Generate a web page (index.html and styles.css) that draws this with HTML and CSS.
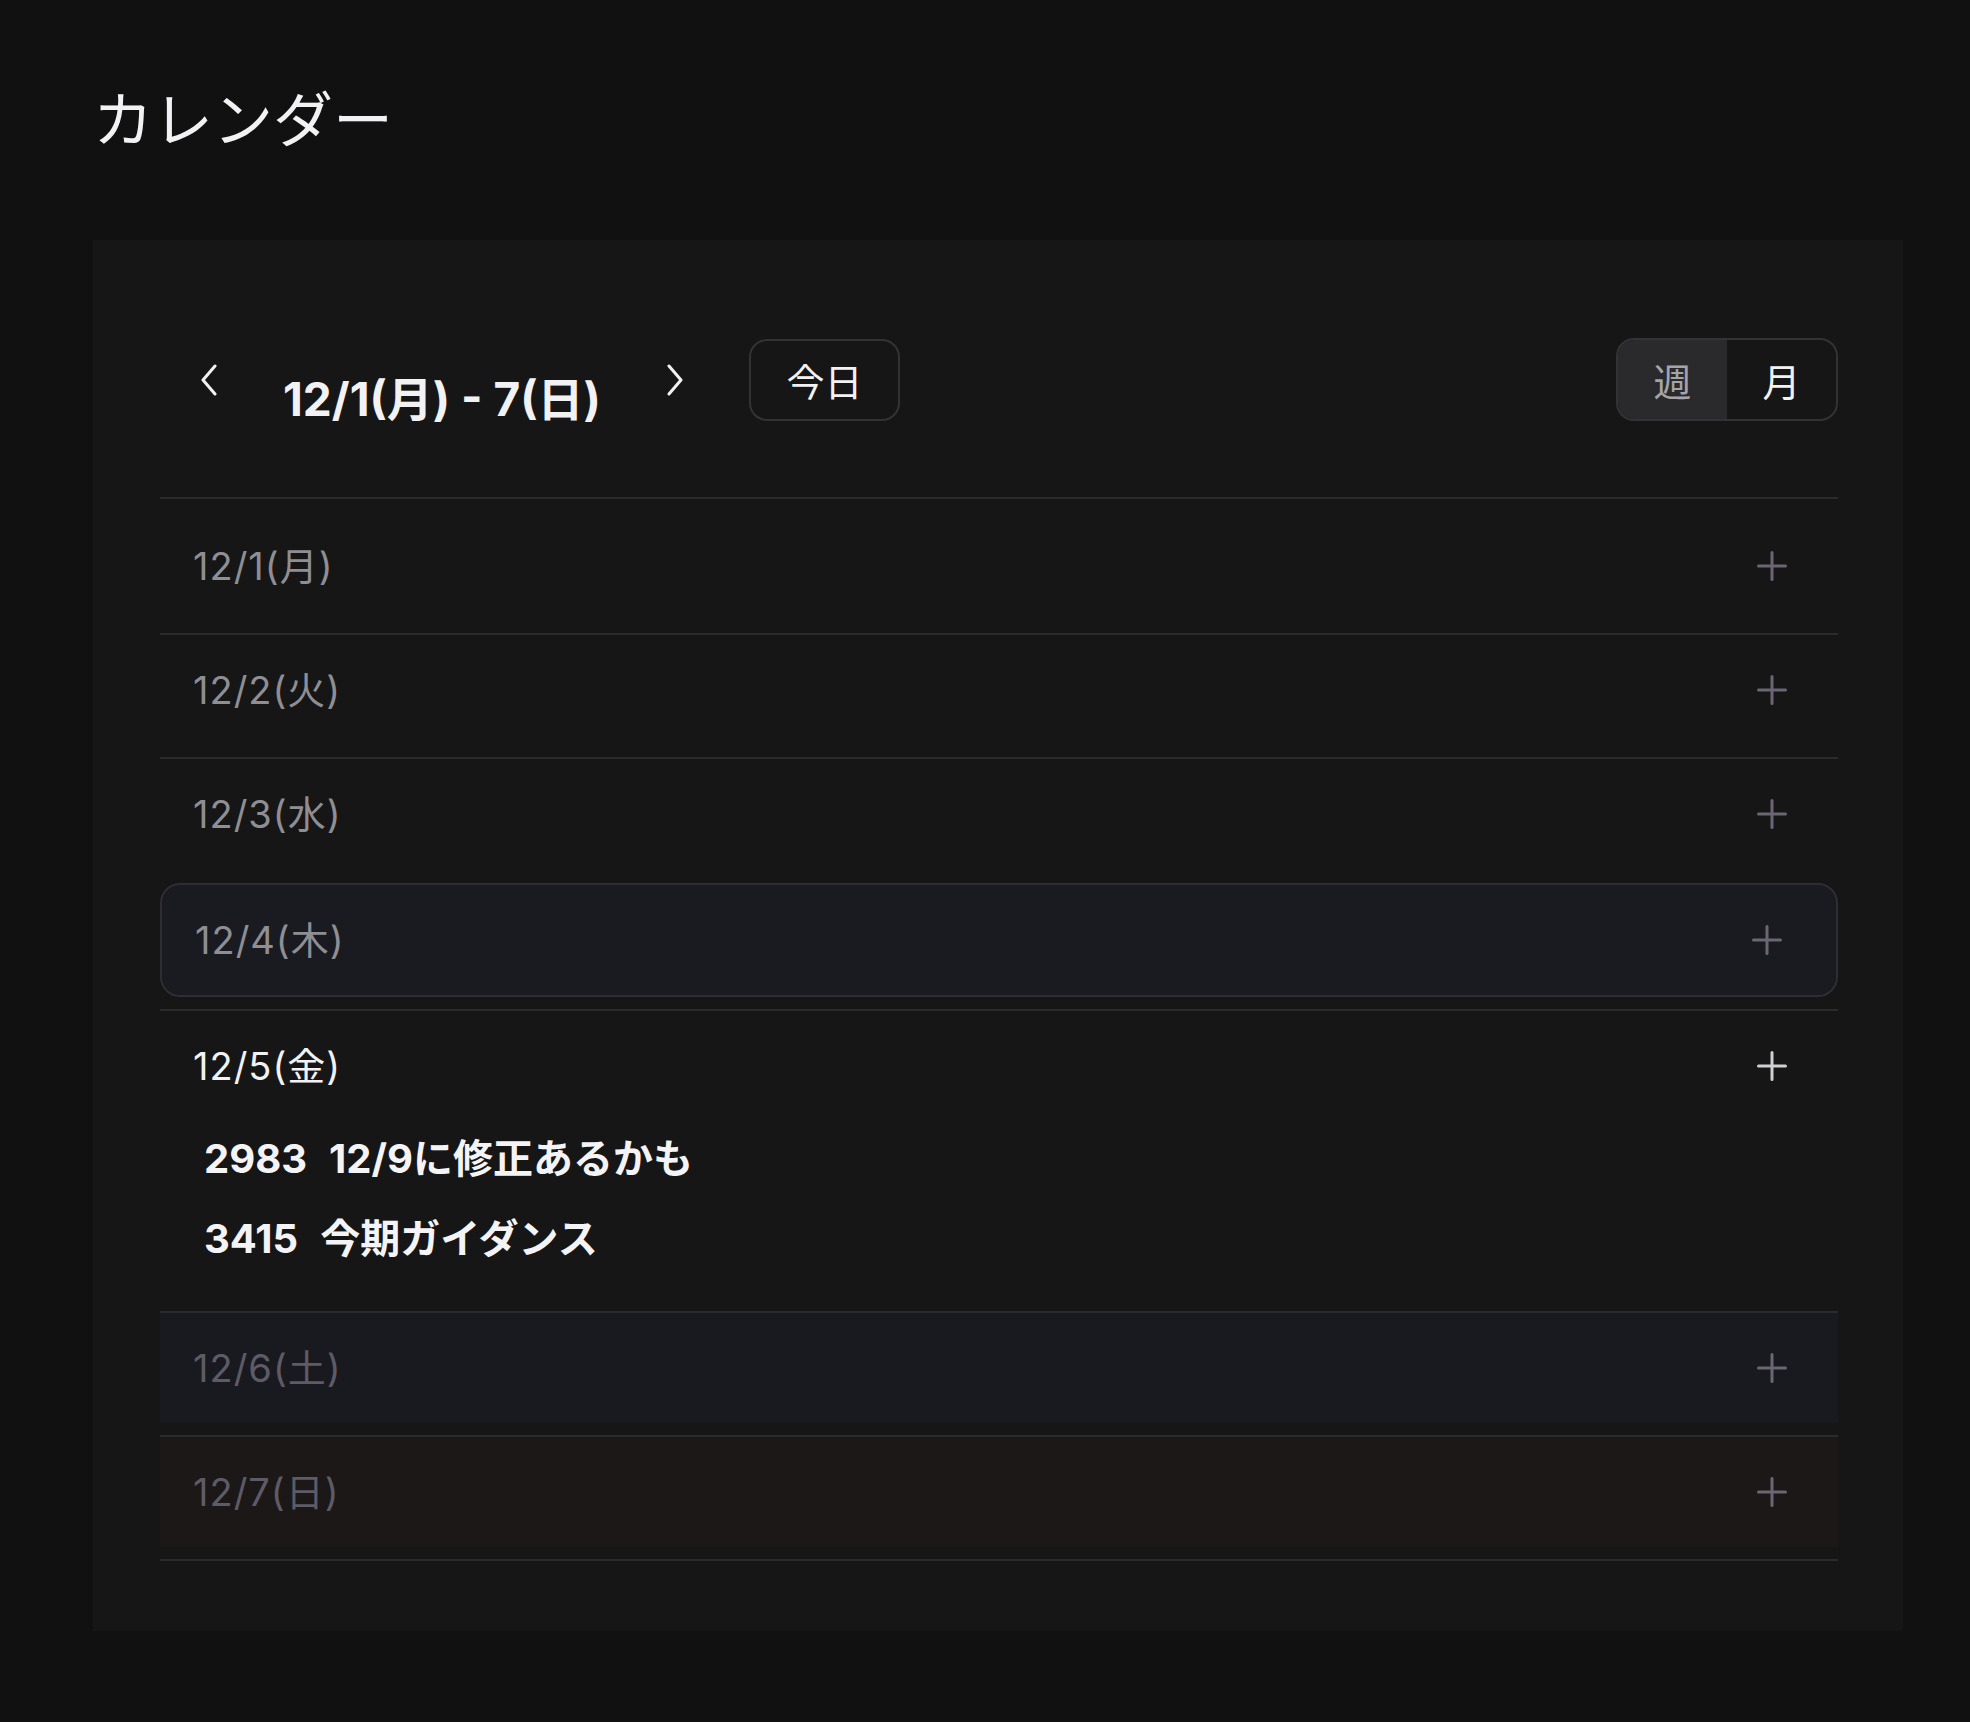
FILE: index.html
```html
<!DOCTYPE html>
<html lang="ja">
<head>
    <meta charset="UTF-8">
    <meta name="viewport" content="width=device-width, initial-scale=1.0">
    <title>カレンダー</title>
    <link rel="stylesheet" href="styles.css">
</head>
<body>
    <div class="page">
        <h1 class="page-title">カレンダー</h1>

        <section class="calendar">
            <div class="cal-header">
                <div class="nav">
                    <button class="nav-btn" aria-label="前の週">
                        <svg width="20" height="32" viewBox="0 0 20 32"><path d="M16 2 L4 16 L16 30" /></svg>
                    </button>
                    <h2 class="range">12/1(月) - 7(日)</h2>
                    <button class="nav-btn" aria-label="次の週">
                        <svg width="20" height="32" viewBox="0 0 20 32"><path d="M4 2 L16 16 L4 30" /></svg>
                    </button>
                    <button class="today-btn">今日</button>
                </div>
                <div class="view-toggle">
                    <button class="active">週</button>
                    <button>月</button>
                </div>
            </div>

            <ul class="days">
                <li class="day">
                    <div class="day-head">
                        <span class="day-label">12/1(月)</span>
                        <button class="add-btn" aria-label="追加"><svg width="30" height="30" viewBox="0 0 30 30"><path d="M15 1.5 V28.5 M1.5 15 H28.5" /></svg></button>
                    </div>
                </li>
                <li class="day">
                    <div class="day-head">
                        <span class="day-label">12/2(火)</span>
                        <button class="add-btn" aria-label="追加"><svg width="30" height="30" viewBox="0 0 30 30"><path d="M15 1.5 V28.5 M1.5 15 H28.5" /></svg></button>
                    </div>
                </li>
                <li class="day">
                    <div class="day-head">
                        <span class="day-label">12/3(水)</span>
                        <button class="add-btn" aria-label="追加"><svg width="30" height="30" viewBox="0 0 30 30"><path d="M15 1.5 V28.5 M1.5 15 H28.5" /></svg></button>
                    </div>
                </li>
                <li class="day today">
                    <div class="day-head">
                        <span class="day-label">12/4(木)</span>
                        <button class="add-btn" aria-label="追加"><svg width="30" height="30" viewBox="0 0 30 30"><path d="M15 1.5 V28.5 M1.5 15 H28.5" /></svg></button>
                    </div>
                </li>
                <li class="day has-events">
                    <div class="day-head">
                        <span class="day-label">12/5(金)</span>
                        <button class="add-btn" aria-label="追加"><svg width="30" height="30" viewBox="0 0 30 30"><path d="M15 1.5 V28.5 M1.5 15 H28.5" /></svg></button>
                    </div>
                    <ul class="events">
                        <li class="event"><span class="event-no">2983</span><span>12/9に修正あるかも</span></li>
                        <li class="event"><span class="event-no">3415</span><span>今期ガイダンス</span></li>
                    </ul>
                </li>
                <li class="day sat">
                    <div class="day-head">
                        <span class="day-label">12/6(土)</span>
                        <button class="add-btn" aria-label="追加"><svg width="30" height="30" viewBox="0 0 30 30"><path d="M15 1.5 V28.5 M1.5 15 H28.5" /></svg></button>
                    </div>
                </li>
                <li class="day sun">
                    <div class="day-head">
                        <span class="day-label">12/7(日)</span>
                        <button class="add-btn" aria-label="追加"><svg width="30" height="30" viewBox="0 0 30 30"><path d="M15 1.5 V28.5 M1.5 15 H28.5" /></svg></button>
                    </div>
                </li>
            </ul>
        </section>
    </div>
</body>
</html>
```

FILE: styles.css
```css
* {
    box-sizing: border-box;
}

body {
    margin: 0;
    background-color: #111111;
    color: #f2f2f4;
    font-family: Inter, "Noto Sans CJK JP", sans-serif;
}

button {
    font-family: inherit;
    background: transparent;
    border: none;
    color: inherit;
    cursor: pointer;
    padding: 0;
}

.page {
    padding: 84px 67px 92px 93px;
}

.page-title {
    margin: 0 0 84px;
    font-size: 60px;
    font-weight: 400;
    line-height: 72px;
}

.calendar {
    background: #161616;
    padding: 98px 65px 70px 67px;
}

/* header: nav + view switch */
.cal-header {
    display: flex;
    align-items: center;
    justify-content: space-between;
    padding: 0 0 76px 17px;
    border-bottom: 2px solid #2b2b2e;
}

.nav {
    display: flex;
    align-items: center;
    gap: 42px;
}

.nav-btn {
    width: 64px;
    height: 64px;
    display: flex;
    align-items: center;
    justify-content: center;
}

.nav-btn svg path {
    fill: none;
    stroke: #f2f2f4;
    stroke-width: 3;
    stroke-linecap: round;
    stroke-linejoin: round;
}

.range {
    margin: 0;
    padding-top: 38px;
    font-size: 46px;
    font-weight: 700;
    line-height: 44px;
}

.today-btn {
    width: 151px;
    height: 82px;
    border: 2px solid #333336;
    border-radius: 18px;
    font-size: 38px;
}

.view-toggle {
    display: flex;
    height: 83px;
    border: 2px solid #333336;
    border-radius: 18px;
    overflow: hidden;
}

.view-toggle button {
    width: 109px;
    font-size: 38px;
}

.view-toggle button.active {
    background: #2a2a2c;
    color: #a4a4a9;
}

/* day list */
.days {
    list-style: none;
    margin: 0;
    padding: 12px 0 0;
}

.day {
    border-bottom: 2px solid #2b2b2e;
    padding-bottom: 12px;
}

.day:has(+ .today) {
    border-bottom-color: transparent;
}

.day-head {
    height: 110px;
    display: flex;
    align-items: center;
    justify-content: space-between;
    padding: 0 51px 0 33px;
    font-size: 38px;
    letter-spacing: 1px;
    color: #8e8e93;
}

.day-label {
    margin-bottom: 6px;
}

.add-btn {
    display: flex;
}

.add-btn svg path {
    stroke: #6b6673;
    stroke-width: 3;
    stroke-linecap: round;
}

.today .day-head {
    height: 114px;
    background: #1a1b20;
    border: 2px solid #2d2d33;
    border-radius: 20px;
    padding-right: 54px;
}

.sat .day-head {
    background: #191a1f;
    color: #5e5a66;
}

.sun .day-head {
    background: #1c1818;
    color: #5e5a66;
}

.has-events .day-head {
    color: #f2f2f4;
}

.has-events .add-btn svg path {
    stroke: #cfcfd4;
}

.events {
    list-style: none;
    margin: 0;
    padding: 10px 0 32px 44px;
    display: flex;
    flex-direction: column;
    gap: 24px;
}

.event {
    display: flex;
    gap: 22px;
    font-size: 40px;
    font-weight: 700;
    line-height: 56px;
    color: #f4f4f6;
}
```
